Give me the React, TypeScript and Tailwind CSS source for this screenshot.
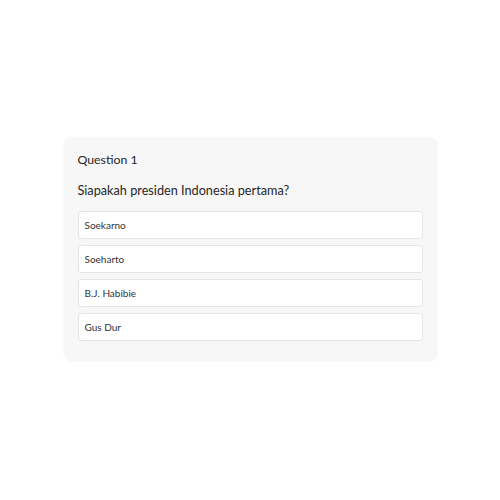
import React from "react";

const options = ["Soekarno", "Soeharto", "B.J. Habibie", "Gus Dur"];

export default function App() {
  return (
    <div
      className="w-[500px] h-[500px] bg-white flex items-center justify-center"
      style={{ fontFamily: 'Lato, "Open Sans", sans-serif' }}
    >
      <div className="w-[373px] h-[223px] mt-[-3px] rounded-lg bg-[#f7f7f7] shadow-[0_1px_3px_rgba(0,0,0,0.06)] px-[14px] pt-[15px] flex flex-col">
        <div className="text-[12.3px] text-[#262626] leading-[16px]">Question 1</div>
        <div className="mt-[14px] text-[12.7px] text-[#262626] leading-[16px]">Siapakah presiden Indonesia pertama?</div>
        <div className="mt-[13px] flex flex-col gap-[6px]">
          {options.map((o) => (
            <div
              key={o}
              className="h-[28px] bg-white border border-[#e4e4e4] rounded-[3px] flex items-center px-[6px] text-[10px] text-[#333]"
            >
              {o}
            </div>
          ))}
        </div>
      </div>
    </div>
  );
}
